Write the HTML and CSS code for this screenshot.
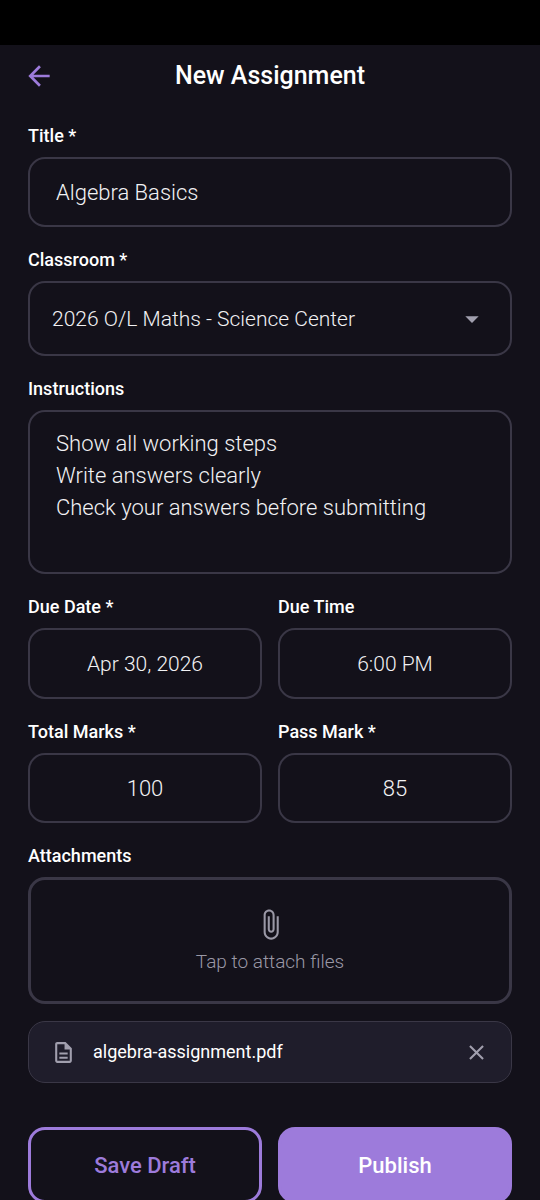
FILE: index.html
```html
<!DOCTYPE html>
<html lang="en">
<head>
<meta charset="utf-8">
<meta name="viewport" content="width=device-width, initial-scale=1">
<title>New Assignment</title>
<link rel="stylesheet" href="styles.css">
</head>
<body>
<div class="app">
  <div class="status-bar"></div>
  <header class="header">
    <button class="icon-button back" type="button" aria-label="Back">
      <svg width="32" height="32" viewBox="0 0 24 24" fill="currentColor" aria-hidden="true"><path d="M20 11H7.83l5.59-5.59L12 4l-8 8 8 8 1.41-1.41L7.83 13H20v-2z"/></svg>
    </button>
    <h1 class="header-title">New Assignment</h1>
  </header>
  <form class="form">
    <div class="group">
      <label class="label" for="title">Title *</label>
      <input class="field" id="title" type="text" value="Algebra Basics">
    </div>
    <div class="group">
      <label class="label" for="classroom">Classroom *</label>
      <div class="select-wrap">
        <select class="field select" id="classroom">
          <option>2026 O/L Maths - Science Center</option>
        </select>
        <svg class="caret" width="32" height="32" viewBox="0 0 24 24" fill="currentColor" aria-hidden="true"><path d="M7 10l5 5 5-5z"/></svg>
      </div>
    </div>
    <div class="group">
      <label class="label" for="instructions">Instructions</label>
      <textarea class="field textarea" id="instructions" rows="4">Show all working steps
Write answers clearly
Check your answers before submitting</textarea>
    </div>
    <div class="pair">
      <div class="group">
        <label class="label" for="due-date">Due Date *</label>
        <input class="field picker" id="due-date" type="text" value="Apr 30, 2026" readonly>
      </div>
      <div class="group">
        <label class="label" for="due-time">Due Time</label>
        <input class="field picker" id="due-time" type="text" value="6:00 PM" readonly>
      </div>
    </div>
    <div class="pair">
      <div class="group">
        <label class="label" for="total">Total Marks *</label>
        <input class="field mark" id="total" type="text" inputmode="numeric" value="100">
      </div>
      <div class="group">
        <label class="label" for="pass">Pass Mark *</label>
        <input class="field mark" id="pass" type="text" inputmode="numeric" value="85">
      </div>
    </div>
    <div class="group">
      <span class="label" id="attachments-label">Attachments</span>
      <button class="dropzone" type="button" aria-describedby="attachments-label">
        <svg width="33" height="33" viewBox="0 0 24 24" fill="currentColor" aria-hidden="true"><path d="M16.5 6v11.5c0 2.21-1.79 4-4 4s-4-1.79-4-4V5c0-1.38 1.12-2.5 2.5-2.5s2.5 1.12 2.5 2.5v10.5c0 .55-.45 1-1 1s-1-.45-1-1V6H10v9.5c0 1.38 1.12 2.5 2.5 2.5s2.5-1.12 2.5-2.5V5c0-2.21-1.79-4-4-4S7 2.79 7 5v12.5c0 3.04 2.46 5.5 5.5 5.5s5.5-2.46 5.5-5.5V6h-1.5z"/></svg>
        <span>Tap to attach files</span>
      </button>
      <div class="file">
        <svg class="file-icon" width="25" height="25" viewBox="0 0 24 24" fill="currentColor" aria-hidden="true"><path d="M8 16h8v2H8zm0-4h8v2H8zm6-10H6c-1.1 0-2 .9-2 2v16c0 1.1.89 2 1.99 2H18c1.1 0 2-.9 2-2V8l-6-6zm4 18H6V4h7v5h5v11z"/></svg>
        <span class="file-name">algebra-assignment.pdf</span>
        <button class="icon-button remove" type="button" aria-label="Remove algebra-assignment.pdf">
          <svg width="25" height="25" viewBox="0 0 24 24" fill="currentColor" aria-hidden="true"><path d="M19 6.41L17.59 5 12 10.59 6.41 5 5 6.41 10.59 12 5 17.59 6.41 19 12 13.41 17.59 19 19 17.59 13.41 12z"/></svg>
        </button>
      </div>
    </div>
    <div class="pair actions">
      <button class="action outline" type="button">Save Draft</button>
      <button class="action solid" type="submit">Publish</button>
    </div>
  </form>
</div>
</body>
</html>
```

FILE: styles.css
```css
* {
  box-sizing: border-box;
}

body {
  margin: 0;
  background: #13111a;
  color: #fff;
  font-family: Roboto, "Noto Sans", sans-serif;
}

button,
input,
select,
textarea {
  margin: 0;
  font-family: inherit;
}

svg {
  display: block;
}

.app {
  display: flex;
  flex-direction: column;
  height: 100vh;
}

.status-bar {
  flex: none;
  height: 45px;
  background: #000;
}

.header {
  flex: none;
  display: grid;
  grid-template-columns: 32px 1fr 32px;
  align-items: center;
  height: 61px;
  padding: 0 23px;
}

.header-title {
  margin: 0;
  font-size: 25px;
  font-weight: 500;
  line-height: 32px;
  text-align: center;
}

.icon-button {
  padding: 0;
  border: 0;
  background: none;
  cursor: pointer;
}

.back {
  color: #9d7bdb;
}

.form {
  flex: 1;
  display: flex;
  flex-direction: column;
  gap: 22px;
  min-height: 0;
  padding: 19px 28px 0;
  overflow-y: auto;
  scrollbar-width: none;
}

.group {
  display: flex;
  flex-direction: column;
  min-width: 0;
}

.label {
  margin-bottom: 10px;
  font-size: 18px;
  font-weight: 500;
  line-height: 22px;
}

.field {
  width: 100%;
  height: 70px;
  padding: 0 26px;
  border: 2px solid #3a3746;
  border-radius: 17px;
  outline: 0;
  background: transparent;
  color: #f2f2f4;
  font-size: 22px;
  font-weight: 300;
}

.select-wrap {
  display: grid;
  align-items: center;
}

.select-wrap > * {
  grid-area: 1 / 1;
}

.select {
  height: 75px;
  padding: 0 64px 0 22px;
  font-size: 21px;
  appearance: none;
}

.select option {
  background: #1f1d2b;
}

.caret {
  justify-self: end;
  margin-right: 24px;
  color: #a19fae;
  pointer-events: none;
}

.textarea {
  display: block;
  height: 164px;
  padding: 16px 26px;
  line-height: 32px;
  resize: none;
}

.pair {
  display: grid;
  grid-template-columns: 1fr 1fr;
  gap: 16px;
}

.picker,
.mark {
  padding: 0 16px;
  text-align: center;
}

.picker {
  height: 71px;
  font-size: 21px;
}

.dropzone {
  display: flex;
  flex-direction: column;
  align-items: center;
  justify-content: center;
  gap: 9px;
  height: 127px;
  border: 3px solid #3a3746;
  border-radius: 17px;
  background: transparent;
  color: #9a98a6;
  font-size: 19px;
  font-weight: 300;
  line-height: 24px;
  cursor: pointer;
}

.file {
  display: flex;
  align-items: center;
  gap: 17px;
  height: 62px;
  margin-top: 17px;
  padding: 0 22px;
  border: 1px solid #3a3746;
  border-radius: 17px;
  background: #1f1d2b;
}

.file-icon {
  flex: none;
  color: #a19fae;
}

.file-name {
  flex: 1;
  font-size: 18px;
  line-height: 24px;
}

.remove {
  color: #a19fae;
}

.actions {
  flex: none;
  margin-top: 22px;
}

.action {
  height: 76px;
  border: 3px solid #9d7bdb;
  border-radius: 17px;
  font-size: 22px;
  font-weight: 500;
  cursor: pointer;
}

.outline {
  background: transparent;
  color: #9d7bdb;
}

.solid {
  background: #9d7bdb;
  color: #fff;
}
```
